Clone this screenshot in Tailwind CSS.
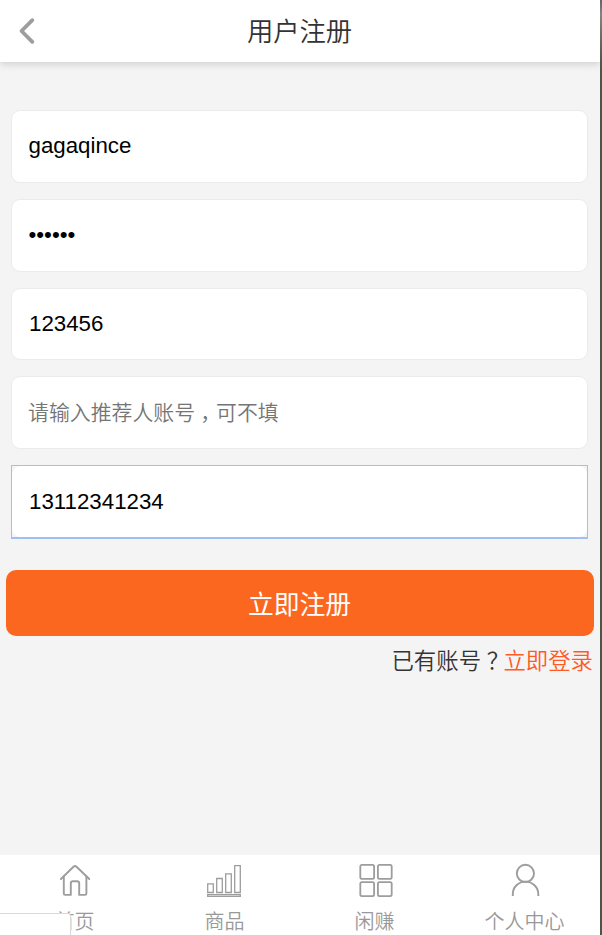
<!DOCTYPE html>
<html lang="zh-CN">
<head>
  <meta charset="UTF-8">
  <title>用户注册</title>
  <meta name="viewport" content="width=device-width, initial-scale=1.0">
  <script src="https://cdn.jsdelivr.net/npm/@tailwindcss/browser@4"></script>
</head>
<body class="h-[935px] flex overflow-hidden bg-[#f4f4f4] text-[#333] font-['Liberation_Sans','Noto_Sans_CJK_SC',sans-serif]">

  <div class="relative w-[600px] h-full shrink-0 flex flex-col">
    <!-- Header -->
    <header class="h-[62px] shrink-0 grid grid-cols-[60px_1fr_60px] items-center bg-white shadow-[0_2px_8px_rgba(0,0,0,0.16)]">
      <a href="#" class="pl-[18px]">
        <svg class="w-[18px] h-[28px]" viewBox="0 0 18 28" fill="none" stroke="#9d9d9d" stroke-width="3.8" stroke-linecap="round" stroke-linejoin="round">
          <path d="M14.3 3.2L3.5 14L14.3 24.8" />
        </svg>
      </a>
      <h1 class="pt-0.5 pr-px text-center text-[26.3px] leading-[60px] font-[350]">用户注册</h1>
    </header>

    <!-- Register form -->
    <form class="pt-12 flex flex-col">
      <div class="pl-[11px] pr-3 flex flex-col gap-4 text-[22.3px] text-black">
        <input type="text" value="gagaqince" class="h-[73px] w-full px-[16.5px] pb-0.5 bg-white border border-[#ebebeb] rounded-[9px] outline-none">
        <input type="password" value="123456" class="h-[73px] w-full px-[16.5px] pb-0.5 bg-white border border-[#ebebeb] rounded-[9px] outline-none">
        <input type="text" value="123456" class="h-[72px] w-full px-[17px] bg-white border border-[#ebebeb] rounded-[9px] outline-none">
        <div class="h-[73px] w-full px-4 flex items-center bg-white border border-[#ebebeb] rounded-[9px] text-[20.9px] font-[350] text-[#757575]">请输入推荐人账号<span class="pl-[0.25em] pr-[0.25em] [font-feature-settings:'halt']">，</span>可不填</div>
        <div class="h-[74px] border border-b-2 border-[#9fbff5]">
          <input type="text" value="13112341234" class="block h-full w-full px-4 bg-white border border-white rounded-[8px] outline-none">
        </div>
      </div>
      <button type="button" class="mt-[31px] mx-1.5 h-[66px] pt-0.5 pr-px rounded-[10px] bg-[#fc671f] text-white text-[25.8px] leading-[66px]">立即注册</button>
      <p class="mt-[9px] mr-[7px] text-right text-[22.4px] leading-[34px] font-[350]">已有账号<span class="pl-[0.25em] pr-[0.25em] [font-feature-settings:'halt']">？</span><a href="#" class="text-[#ff5a26]">立即登录</a></p>
    </form>

    <!-- Bottom tabs -->
    <nav class="mt-auto h-20 shrink-0 grid grid-cols-4 bg-white text-[#999] text-[20px] font-[350]">
      <a href="#" class="flex flex-col items-center pt-2">
        <svg class="w-9 h-9" viewBox="0 0 36 36" fill="none" stroke="#9d9d9d" stroke-width="1.9" stroke-linecap="round" stroke-linejoin="round">
          <path d="M3.9 16L16.5 3.7Q18 2.4 19.5 3.7L32.3 16" />
          <path d="M6.8 13.5V30.5Q6.8 31.9 8.2 31.9H13.8V20.5Q13.8 18.3 16 18.3H20Q22.2 18.3 22.2 20.5V31.9H28Q29.4 31.9 29.4 30.5V13.5" />
        </svg>
        <span class="pr-px leading-[46px]">首页</span>
      </a>
      <a href="#" class="flex flex-col items-center pt-2">
        <svg class="w-9 h-9" viewBox="0 0 36 36" fill="none" stroke="#9d9d9d" stroke-width="1.3">
          <path d="M.7 20.8H6.3V29.5H.7ZM9.7 15.5H15.3V29.5H9.7ZM18.7 10.8H24.3V29.5H18.7ZM27.7 2.7H33.3V29.5H27.7ZM.7 31.6H33.3V33.4H.7Z" />
        </svg>
        <span class="pr-px leading-[46px]">商品</span>
      </a>
      <a href="#" class="flex flex-col items-center pt-2">
        <svg class="w-9 h-9" viewBox="0 0 36 36" fill="none" stroke="#9d9d9d" stroke-width="1.8">
          <rect x="3.3" y="1.9" width="13.8" height="14" rx="1.6" />
          <rect x="20.9" y="1.9" width="13.8" height="14" rx="1.6" />
          <rect x="3.3" y="19.2" width="13.8" height="14" rx="1.6" />
          <rect x="20.9" y="19.2" width="13.8" height="14" rx="1.6" />
        </svg>
        <span class="pr-px leading-[46px]">闲赚</span>
      </a>
      <a href="#" class="flex flex-col items-center pt-2">
        <svg class="w-9 h-9" viewBox="0 0 36 36" fill="none" stroke="#9d9d9d" stroke-width="1.9">
          <circle cx="18.4" cy="10.4" r="8.6" />
          <path d="M5.8 33V31C5.8 24.3 11.4 18.6 18.4 18.6S31.3 24.3 31.3 31V33" />
        </svg>
        <span class="pr-px leading-[46px]">个人中心</span>
      </a>
    </nav>

    <!-- Browser status bubble over the first tab -->
    <div class="absolute left-0 bottom-0 w-[71px] h-[22px] bg-white border-t border-r border-[#d9d9d9] rounded-tr-[3px]"></div>
  </div>

  <!-- Window edge -->
  <div class="flex-1 h-full flex flex-col bg-[#4b5645]">
    <div class="h-[70px] bg-linear-to-b from-[#656963] via-[#8b8f89] via-20% to-[#4b5645]"></div>
  </div>

</body>
</html>
